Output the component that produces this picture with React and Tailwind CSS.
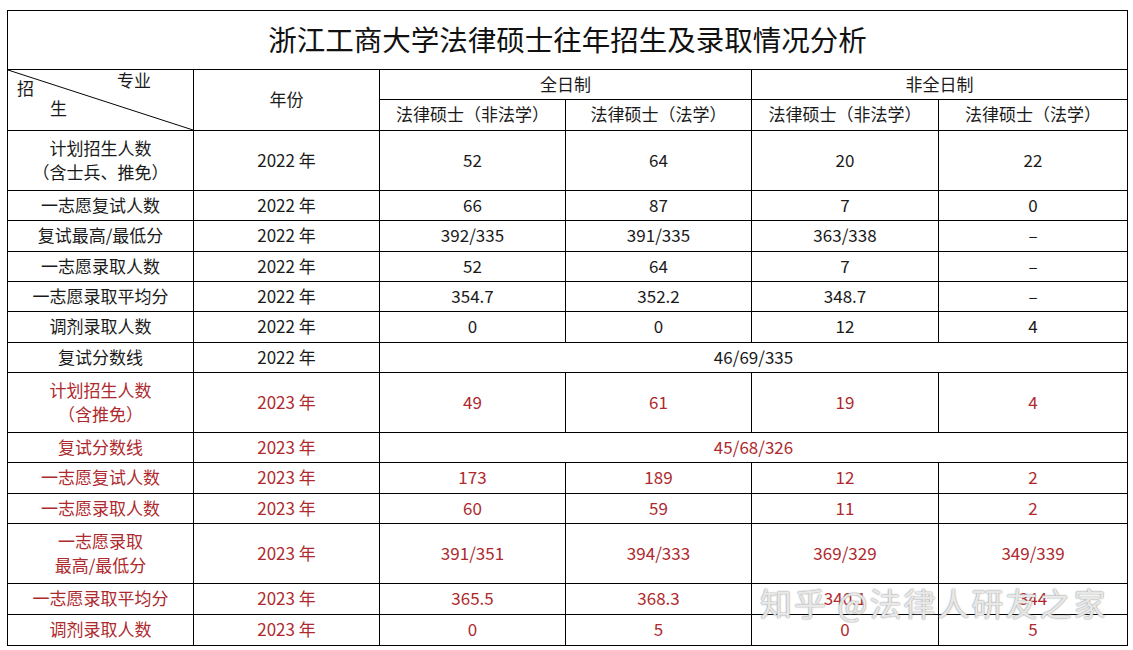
import React from 'react'

const RED = 'text-[#ae2a2e]'

const rows2022 = [
  { label: ['计划招生人数', '（含士兵、推免）'], h: 'h-[60px]', v: ['52', '64', '20', '22'] },
  { label: ['一志愿复试人数'], h: 'h-[30px]', v: ['66', '87', '7', '0'] },
  { label: ['复试最高/最低分'], h: 'h-[31px]', v: ['392/335', '391/335', '363/338', '–'] },
  { label: ['一志愿录取人数'], h: 'h-[30px]', v: ['52', '64', '7', '–'] },
  { label: ['一志愿录取平均分'], h: 'h-[30px]', v: ['354.7', '352.2', '348.7', '–'] },
  { label: ['调剂录取人数'], h: 'h-[31px]', v: ['0', '0', '12', '4'] },
  { label: ['复试分数线'], h: 'h-[30px]', span: '46/69/335' },
]

const rows2023 = [
  { label: ['计划招生人数', '（含推免）'], h: 'h-[60px]', v: ['49', '61', '19', '4'] },
  { label: ['复试分数线'], h: 'h-[30px]', span: '45/68/326' },
  { label: ['一志愿复试人数'], h: 'h-[31px]', v: ['173', '189', '12', '2'] },
  { label: ['一志愿录取人数'], h: 'h-[30px]', v: ['60', '59', '11', '2'] },
  { label: ['一志愿录取', '最高/最低分'], h: 'h-[60px]', v: ['391/351', '394/333', '369/329', '349/339'] },
  { label: ['一志愿录取平均分'], h: 'h-[31px]', v: ['365.5', '368.3', '340.1', '344'] },
  { label: ['调剂录取人数'], h: 'h-[31px]', v: ['0', '5', '0', '5'] },
]

const td = 'border border-black text-center align-middle p-0 pb-[2px]'

function Row({ r, year, red }) {
  const color = red ? RED : 'text-[#1a1a1a]'
  return (
    <tr className={`${r.h} ${color}`}>
      <td className={`${td} leading-[24px]`}>
        {r.label.map((l, i) => (
          <div key={i}>{l}</div>
        ))}
      </td>
      <td className={td}>{year} 年</td>
      {r.span ? (
        <td className={td} colSpan={4}>
          {r.span}
        </td>
      ) : (
        r.v.map((x, i) => (
          <td key={i} className={td}>
            {x}
          </td>
        ))
      )}
    </tr>
  )
}

export default function App() {
  return (
    <div className="relative w-[1133px] h-[650px] bg-white pt-[10px] pl-[7px] font-['Noto_Sans_CJK_SC','Noto_Sans',sans-serif] text-[17px] leading-[22px]">
      <table className="border-collapse table-fixed w-[1120px]">
        <colgroup>
          <col className="w-[186px]" />
          <col className="w-[186px]" />
          <col className="w-[186px]" />
          <col className="w-[186px]" />
          <col className="w-[187px]" />
          <col className="w-[189px]" />
        </colgroup>
        <tbody>
          <tr className="h-[59px]">
            <td colSpan={6} className={`${td} text-[28.5px] leading-[36px] text-[#111]`}>
              浙江工商大学法律硕士往年招生及录取情况分析
            </td>
          </tr>
          <tr className="h-[30px] text-[#1a1a1a]">
            <td rowSpan={2} className={`${td} relative`}>
              <svg className="absolute inset-0 w-full h-full" viewBox="0 0 186 61" preserveAspectRatio="none">
                <line x1="0" y1="0" x2="186" y2="61" stroke="#000" strokeWidth="1" />
              </svg>
              <span className="absolute left-[109px] top-[-1px]">专业</span>
              <span className="absolute left-[9px] top-[7px]">招</span>
              <span className="absolute left-[42px] top-[27px]">生</span>
            </td>
            <td rowSpan={2} className={td}>
              年份
            </td>
            <td colSpan={2} className={td}>
              全日制
            </td>
            <td colSpan={2} className={td}>
              非全日制
            </td>
          </tr>
          <tr className="h-[31px] text-[#1a1a1a]">
            <td className={td}>法律硕士（非法学）</td>
            <td className={td}>法律硕士（法学）</td>
            <td className={td}>法律硕士（非法学）</td>
            <td className={td}>法律硕士（法学）</td>
          </tr>
          {rows2022.map((r, i) => (
            <Row key={'a' + i} r={r} year="2022" />
          ))}
          {rows2023.map((r, i) => (
            <Row key={'b' + i} r={r} year="2023" red />
          ))}
        </tbody>
      </table>

      {/* watermark */}
      <div className="absolute left-[760px] top-[582px] text-[32px] leading-[40px] tracking-[2px] text-white/80 [text-shadow:0_0_1px_#888,0_0_2px_#aaa] pointer-events-none whitespace-nowrap">
        知乎 @法律人研友之家
      </div>
    </div>
  )
}
